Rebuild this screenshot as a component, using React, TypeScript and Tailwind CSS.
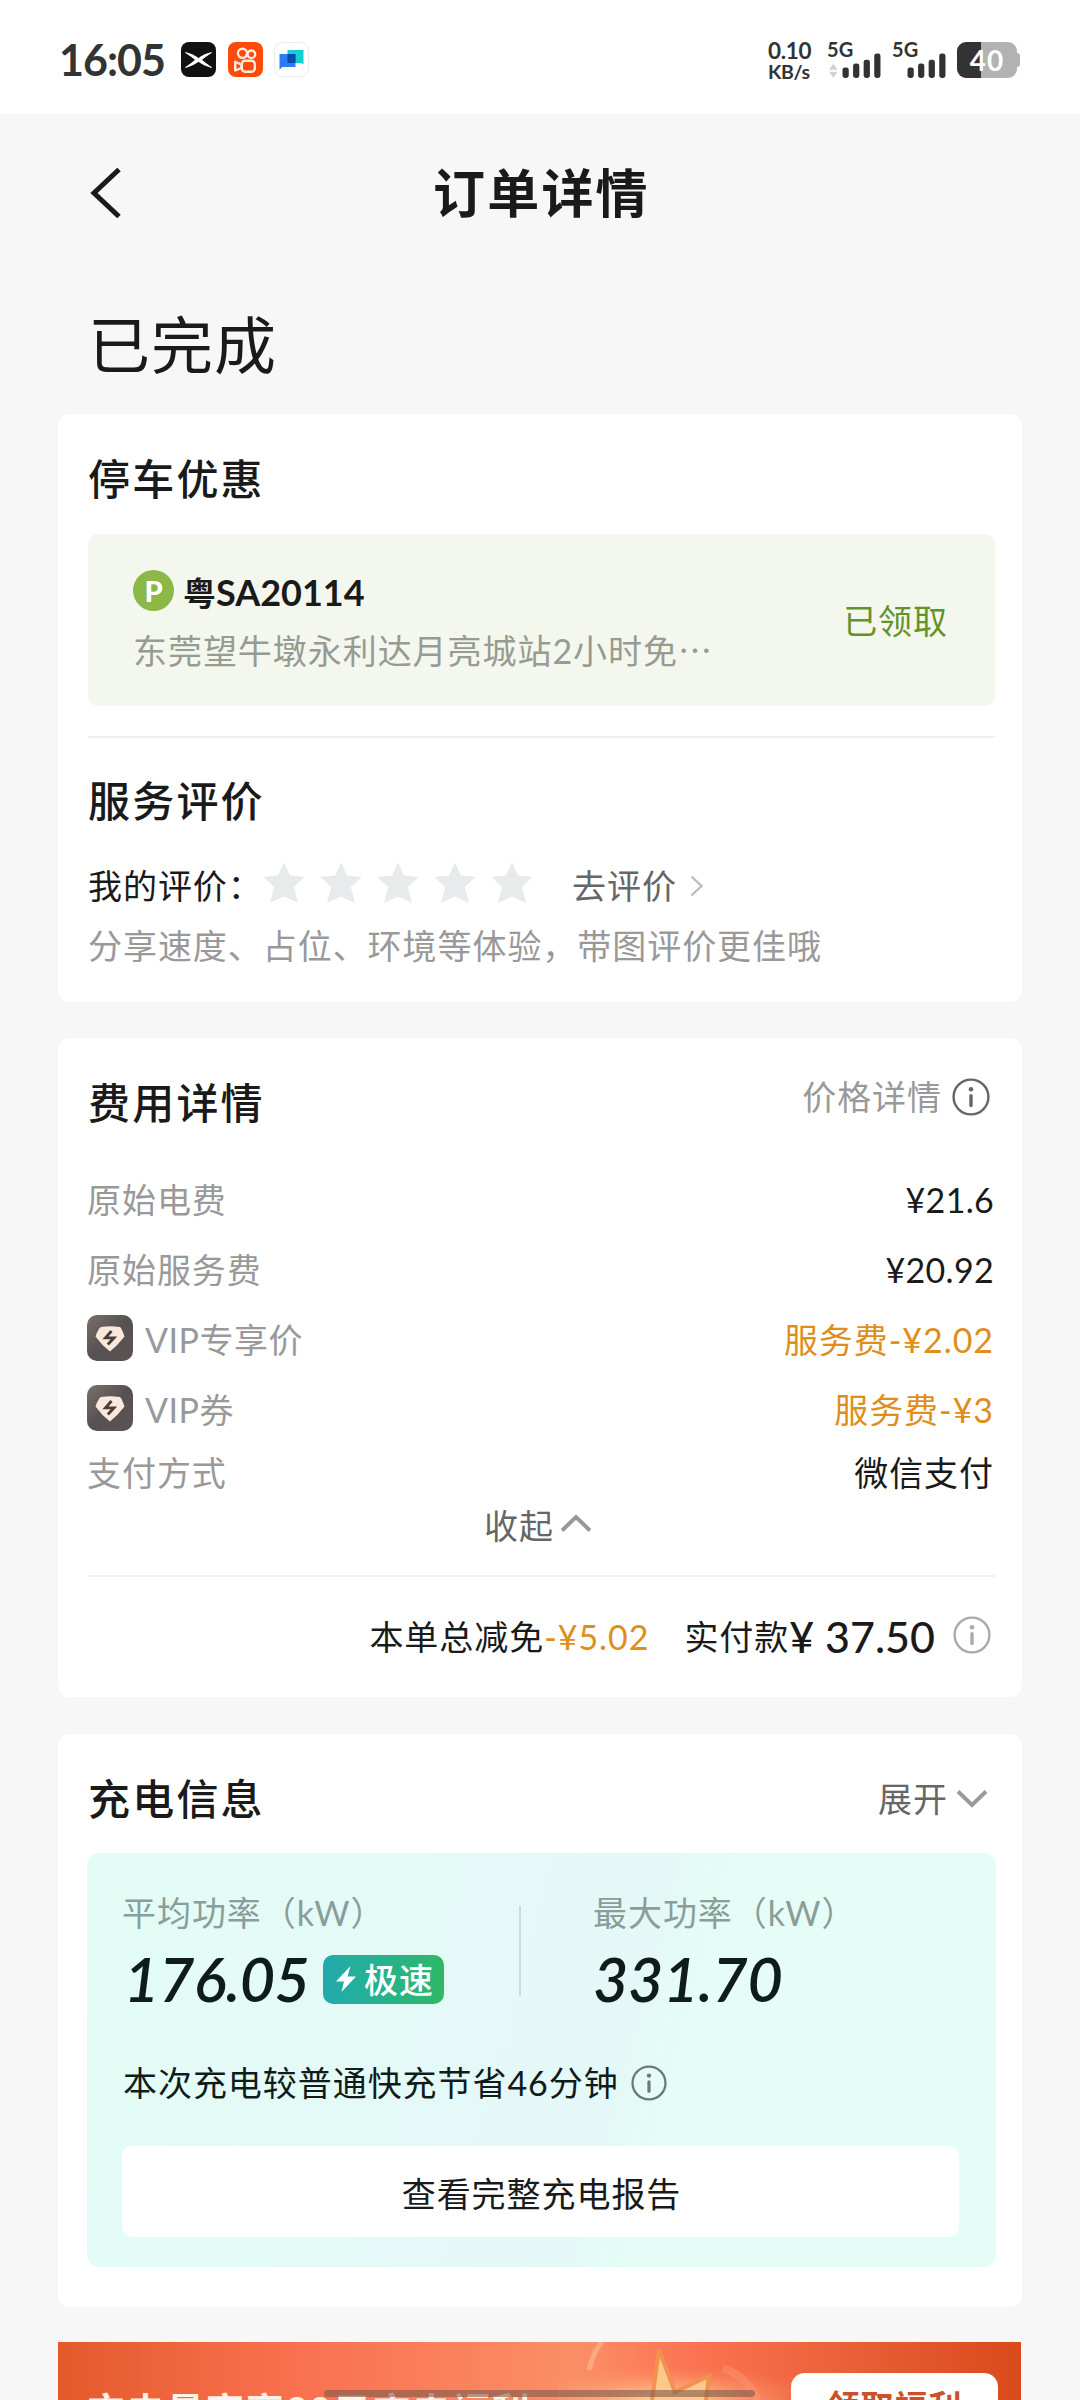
import React from "react";

const INK = "text-[#1a1a1a]";

function Info({ size, className }: { size: number; className: string }) {
  return (
    <svg width={size} height={size} viewBox="0 0 38 38" fill="none" className={className}>
      <circle cx="19" cy="19" r="17.4" stroke="currentColor" strokeWidth="2.4" />
      <circle cx="19" cy="11.2" r="2.3" fill="currentColor" />
      <path d="M19 17.8V27.6" stroke="currentColor" strokeWidth="3.4" strokeLinecap="round" />
    </svg>
  );
}

function Star() {
  return (
    <svg width="42" height="42" viewBox="0 0 42 42" fill="#e8ebeb">
      <path d="M21 0.5 27 13.4 41.6 15 30.8 25 35 41 21 34.6 7 41 11.2 25 0.4 15 15 13.4Z" />
    </svg>
  );
}

function VipIcon() {
  return (
    <svg width="46" height="46" viewBox="0 0 46 46" className="mr-[12px] -translate-y-0.5">
      <defs>
        <linearGradient id="vip" x1="0" y1="0" x2="1" y2="1">
          <stop offset="0" stopColor="#7d6f6b" />
          <stop offset="0.5" stopColor="#565152" />
          <stop offset="1" stopColor="#5d5454" />
        </linearGradient>
      </defs>
      <rect width="46" height="46" rx="10" fill="url(#vip)" />
      <path d="M14 12Q23 10.600 33 12Q35 14 37.500 21.500Q31 30 23 36.500Q14.500 30 8.500 21.500Q11 14 14 12Z" fill="#fbe8dc" />
      <path d="M24.500 16 18.500 22.800H27L20.800 29.500" fill="none" stroke="#463f3e" strokeWidth="2.800" />
    </svg>
  );
}

function Signal({ arrows }: { arrows?: boolean }) {
  return (
    <div className="flex h-[36px] w-[55px] flex-col">
      <span className="h-[14px] text-[20px] leading-[15px] font-bold tracking-[0.2px]">5G</span>
      <svg width="56" height="26" viewBox="0 0 56 26" className="-mt-[3px]">
        {arrows && <path d="M1 17.500 5.500 11 10 17.500ZM1 19.500 5.500 26 10 19.500Z" fill="#d2d2d2" />}
        <g fill="#333">
          <rect x="15" y="15" width="6.500" height="11" rx="2.500" />
          <rect x="26" y="11" width="6.500" height="15" rx="2.500" />
          <rect x="37" y="7" width="6.500" height="19" rx="2.500" />
          <rect x="48" y="0.500" width="6.500" height="25.500" rx="2.500" />
        </g>
      </svg>
    </div>
  );
}

function StatusBar() {
  return (
    <div className="flex h-[114px] items-start bg-white pt-[42px] pl-[59px] text-[#333]">
      <span className="w-[122px] text-[43px] leading-[36px] font-bold tracking-[-1px]">16:05</span>
      <svg width="35" height="35" viewBox="0 0 35 35">
        <rect width="35" height="35" rx="8" fill="#111" />
        <path d="M4.500 10.500Q13 12.500 17.500 16.400Q22 12.500 30.500 10.500Q24 15 20.500 17.800Q24 21 30.500 25.500Q22 23 17.500 19.400Q13 23 4.500 25.500Q11 21 14.500 17.800Q11 15 4.500 10.500Z" fill="#fff" stroke="#fff" strokeWidth="0.800" />
      </svg>
      <svg width="35" height="35" viewBox="0 0 35 35" className="ml-3">
        <rect width="35" height="35" rx="8" fill="#fb4a0a" />
        <g fill="none" stroke="#ffeadf" strokeWidth="2.400" strokeLinejoin="round">
          <circle cx="14.500" cy="11.300" r="4.600" />
          <circle cx="23.400" cy="12.300" r="3.800" />
          <rect x="13.800" y="18.700" width="13" height="11" rx="3.200" />
          <path d="M13.500 22.500 7.200 19.800V28.500L13.500 26Z" />
        </g>
      </svg>
      <svg width="35" height="35" viewBox="0 0 35 35" className="ml-[11px]">
        <rect x="0.500" y="0.500" width="34" height="34" rx="8" fill="#fff" stroke="#ececec" />
        <path d="M13.500 8H29.500V22.500L27 21H13.500Z" fill="#12cfd4" />
        <path d="M5.500 12H21.500V25H8.500L5.500 27.500Z" fill="#2b7df5" />
        <path d="M13.500 12H21.500V21H13.500Z" fill="#0a4bab" />
      </svg>
      <div className="ml-[459px] flex w-[59px] flex-col text-[21px] font-bold">
        <span className="h-[17px] text-[22.500px] leading-[17px] tracking-[-0.3px]">0.10</span>
        <span className="mt-[4px] h-[16px] text-[19.500px] leading-[17px] tracking-[-0.3px]">KB/s</span>
      </div>
      <Signal arrows />
      <div className="w-[10px]" />
      <Signal />
      <div className="ml-[10px] flex items-center">
        <div className="flex h-[36px] w-[60px] items-center justify-center rounded-[9px] bg-linear-to-r from-[#333] from-40% to-[#b2b2b2] to-40% text-[28px] leading-[36px] font-bold text-white">
          <span>40</span>
        </div>
        <div className="h-[14px] w-[3px] rounded-r-sm bg-[#b2b2b2]" />
      </div>
    </div>
  );
}

function Heading({ children }: { children: React.ReactNode }) {
  return <h2 className="h-11 text-[42px] leading-11 font-medium tracking-[2.2px]">{children}</h2>;
}

function FeeRow({ label, value, vip, gap }: { label: string; value: string; vip?: boolean; gap: string }) {
  return (
    <div className={`flex h-[46px] items-center justify-between pr-px leading-[46px] ${gap}`}>
      <div className="-ml-px flex items-center text-[#999]">
        {vip && <VipIcon />}
        <span className={vip ? "tracking-[0.5px]" : ""}>{label}</span>
      </div>
      <span className={vip ? "text-[#e08e1b]" : value.startsWith("¥") ? "tracking-[0.3px]" : ""}>{value}</span>
    </div>
  );
}

export default function App() {
  return (
    <div
      className={`h-[2400px] w-[1080px] overflow-hidden bg-[#f7f7f7] font-['Lato','Noto_Sans_CJK_SC',sans-serif] text-[34px] tracking-[0.95px] ${INK}`}
      lang="zh-CN"
    >
      <StatusBar />

      <header className="flex h-[158px] items-center pl-[90px]">
        <svg width="32" height="50" viewBox="0 0 32 50" fill="none">
          <path d="M29 1.500 4 25 29 48.500" stroke="#1a1a1a" strokeWidth="5" />
        </svg>
        <h1 className="ml-[311px] text-[52px] leading-[60px] font-bold tracking-[2.2px]">订单详情</h1>
      </header>

      <div className="mt-[37px] h-[72px] pl-[88px] text-[62px] leading-[72px] tracking-[1px]">已完成</div>

      <main className="mx-[58px] mt-[33px] flex flex-col">
        <section className="h-[588px] rounded-xl bg-white pt-[43px] pr-[27px] pl-[30px]">
          <Heading>停车优惠</Heading>
          <div className="mt-[33px] flex h-[172px] items-center justify-between rounded-[10px] bg-[#f4f7ee] pr-[47px] pl-[45px]">
            <div className="flex flex-col">
              <div className="flex h-10 items-center">
                <div className="flex size-[41px] items-center justify-center rounded-full bg-[#8bb846] text-[29px] leading-10 font-black tracking-normal text-white">P</div>
                <span className="mt-[4px] ml-[9px] text-[36px] leading-10 font-bold tracking-normal">
                  <span className="text-[33px]">粤</span>SA20114
                </span>
              </div>
              <div className="mt-[19px] h-10 leading-10 text-[#979b92]">
                东莞望牛墩永利达月亮城站2小时免<span className="font-['Noto_Sans_CJK_SC']">⋯</span>
              </div>
            </div>
            <span className="mt-px leading-10 text-[#64932a]">已领取</span>
          </div>
          <div className="mt-[30px] h-[2px] bg-[#f0f0f0]" />
          <div className="mt-[41px]">
            <Heading>服务评价</Heading>
          </div>
          <div className="mt-[42px] flex h-[42px] items-center leading-[42px]">
            <span className="w-[175px] shrink-0 whitespace-nowrap">我的评价：</span>
            <div className="-mt-[6px] flex gap-[15px]">
              <Star />
              <Star />
              <Star />
              <Star />
              <Star />
            </div>
            <span className="ml-[39px] text-[#666]">去评价</span>
            <svg width="14" height="22" viewBox="0 0 14 22" fill="none" className="ml-[13px]">
              <path d="M1.500 1.500 11.500 11 1.500 20.500" stroke="#bdbdbd" strokeWidth="2.400" />
            </svg>
          </div>
          <div className="mt-[19px] h-10 leading-10 text-[#999]">分享速度、占位、环境等体验，带图评价更佳哦</div>
        </section>

        <section className="mt-[36px] h-[659px] rounded-xl bg-white pt-[43px] pr-[27px] pl-[30px]">
          <div className="flex justify-between">
            <Heading>费用详情</Heading>
            <div className="-mt-[6px] flex h-11 items-center leading-11 text-[#999]">
              价格详情
              <Info size={38} className="mr-[5px] ml-[10px] text-[#666]" />
            </div>
          </div>
          <FeeRow gap="mt-[52px]" label="原始电费" value="¥21.6" />
          <FeeRow gap="mt-[24px]" label="原始服务费" value="¥20.92" />
          <FeeRow gap="mt-[24px]" label="VIP专享价" value="服务费-¥2.02" vip />
          <FeeRow gap="mt-[24px]" label="VIP券" value="服务费-¥3" vip />
          <FeeRow gap="mt-[17px]" label="支付方式" value="微信支付" />
          <div className="mt-[7px] flex h-[46px] items-center pl-[396px] leading-[46px] text-[#666]">
            收起
            <svg width="30" height="20" viewBox="0 0 30 20" fill="none" className="-mt-[6px] ml-[7px]">
              <path d="M1 17.500 15 4 29 17.500" stroke="#999" strokeWidth="4" />
            </svg>
          </div>
          <div className="mt-[26px] h-[2px] bg-[#f0f0f0]" />
          <div className="mt-[36px] flex h-12 items-center justify-end pr-[4px] leading-12">
            <span>本单总减免</span>
            <span className="text-[#e08e1b]">-¥5.02</span>
            <span className="ml-[35px]">实付款</span>
            <span className="text-[43px] font-medium tracking-normal">¥ 37.50</span>
            <Info size={38} className="-mt-[4px] ml-[18px] text-[#aaa]" />
          </div>
        </section>

        <section className="mt-[37px] h-[573px] rounded-xl bg-white pt-[43px] pr-[26px] pl-[29px]">
          <div className="flex justify-between pl-px">
            <Heading>充电信息</Heading>
            <div className="flex h-11 items-center leading-11 text-[#666]">
              展开
              <svg width="30" height="20" viewBox="0 0 30 20" fill="none" className="mr-[9px] ml-[9px]">
                <path d="M1 2.500 15 16 29 2.500" stroke="#999" strokeWidth="4" />
              </svg>
            </div>
          </div>
          <div className="mt-[32px] flex h-[414px] flex-col rounded-xl bg-[linear-gradient(105deg,#e3fcf5_0%,#e4faf7_25%,#e4f9f7_58%,#e5fdf6_64%,#e5fdf6_100%)] px-[35px] pt-[40px]">
            <div className="flex h-[111px] text-[#8a9d99]">
              <div className="w-[397px] shrink-0">
                <div className="h-10 leading-10">平均功率（kW）</div>
                <div className="mt-[21px] flex h-[50px] items-center pl-[2px]">
                  <span className="w-[199px] text-[61px] leading-[50px] font-semibold tracking-[-0.5px] text-[#101c1a] italic">176.05</span>
                  <div className="flex h-[49px] w-[121px] shrink-0 items-center rounded-[10px] bg-linear-to-r from-[#23aaad] to-[#2fb866] pl-[12px] text-white">
                    <svg width="22" height="26" viewBox="0 0 22 26" fill="#fff">
                      <path d="M15.500 0 1 15.500H9L6.500 26 21 10.500H12.500Z" />
                    </svg>
                    <span className="ml-[7px] text-[34px] leading-[49px] font-medium">极速</span>
                  </div>
                </div>
              </div>
              <div className="mt-[13px] h-[90px] w-[2px] bg-[#cbdcda]" />
              <div className="ml-[72px]">
                <div className="h-10 leading-10">最大功率（kW）</div>
                <div className="mt-[21px] h-[50px] text-[61px] leading-[50px] font-semibold tracking-[-0.3px] text-[#101c1a] italic">331.70</div>
              </div>
            </div>
            <div className="mt-[59px] flex h-10 items-center pl-px leading-10 text-[#101c1a]">
              本次充电较普通快充节省46分钟
              <Info size={36} className="ml-[12px] text-[#6c7a77]" />
            </div>
            <div className="mt-[43px] h-[91px] w-[837px] rounded-[10px] bg-white pt-[2px] pl-[2px] text-center leading-[91px]">
              查看完整充电报告
            </div>
          </div>
        </section>

        <section className="relative mt-[35px] h-[58px] w-[963px] overflow-hidden bg-[linear-gradient(90deg,#e45a2c_0%,#f9704e_24%,#fb8f66_54%,#fb7350_66%,#d94a1c_100%)]">
          <svg width="260" height="58" viewBox="0 0 260 58" className="absolute top-0 left-[500px]">
            <defs>
              <radialGradient id="glow" cx="0.42" cy="1" r="0.6">
                <stop offset="0" stopColor="#ffe0a0" />
                <stop offset="1" stopColor="#fb8a62" stopOpacity="0" />
              </radialGradient>
            </defs>
            <rect width="260" height="58" fill="url(#glow)" />
            <path d="M44 0Q35 10 31 28" stroke="#ffc49c" strokeWidth="5" fill="none" opacity="0.5" />
            <path d="M165 26Q188 34 200 58" stroke="#fba183" strokeWidth="8" fill="none" opacity="0.35" />
            <path d="M94 58 101 8 117 50 151 34 148 58" stroke="#f3914f" strokeWidth="4" fill="#fdc98b" />
          </svg>
          <div className="absolute top-[45px] left-[29px] text-[38px] leading-[46px] font-bold tracking-[1.700px] whitespace-nowrap text-[#fff3ea]">
            充电最高享30元充电福利
          </div>
          <div className="absolute top-[31px] left-[733px] h-[80px] w-[207px] rounded-[14px] bg-white text-center text-[33px] leading-[66px] font-bold text-[#c9522a]">
            领取福利
          </div>
          <div className="absolute top-[48px] left-[266px] h-[7px] w-[431px] rounded-full bg-[#7d5a4a]/60" />
        </section>
      </main>
    </div>
  );
}
